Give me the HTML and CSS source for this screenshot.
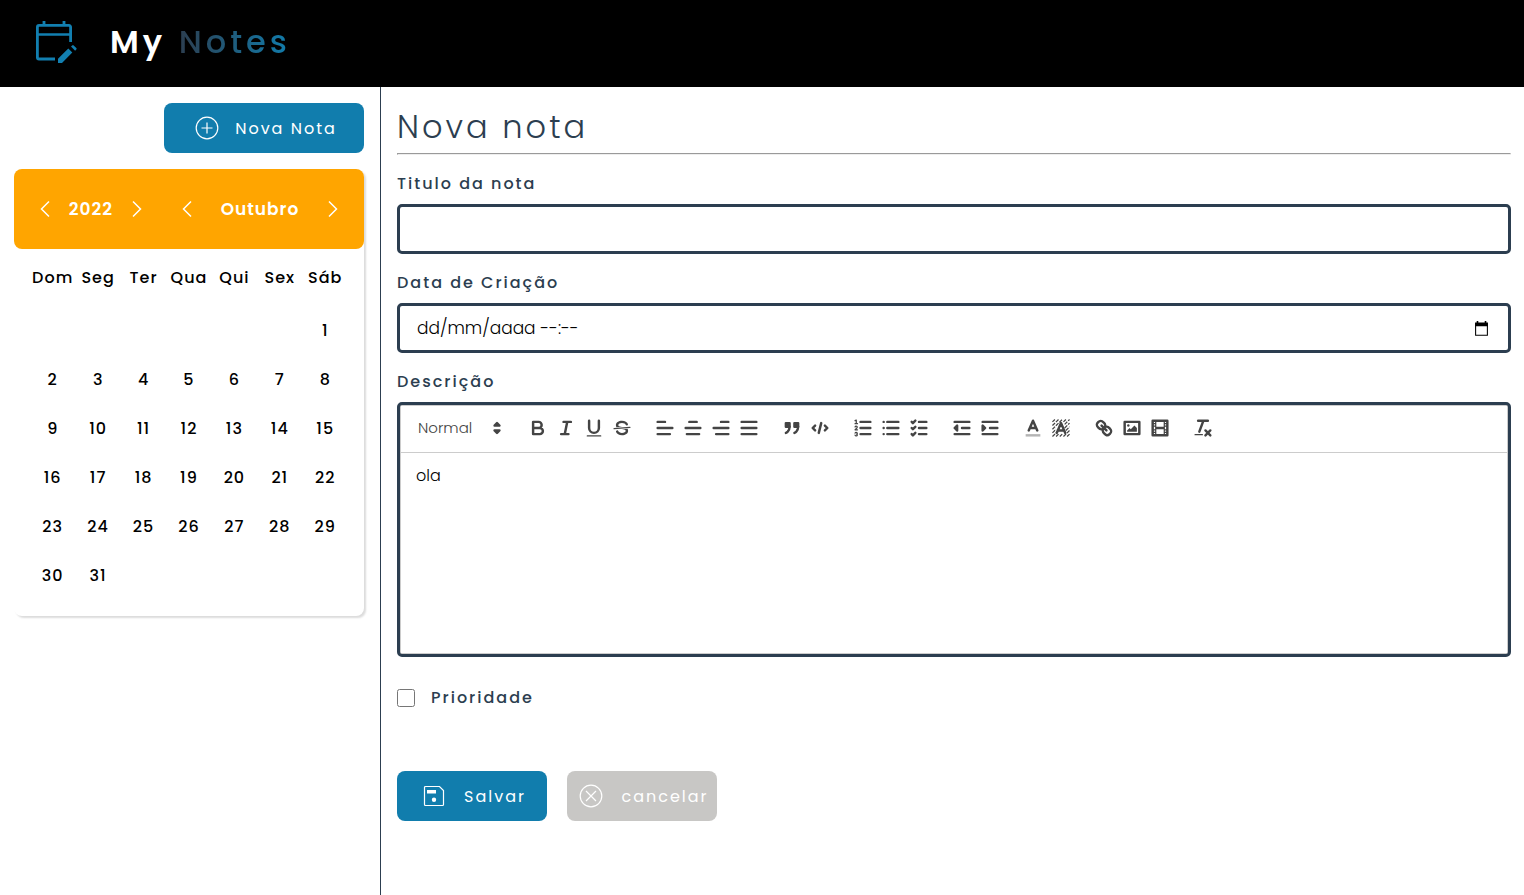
FILE: index.html
```html
<!DOCTYPE html>
<html lang="pt-BR">
<head>
<meta charset="utf-8">
<title>My Notes</title>
<link rel="stylesheet" href="styles.css">
</head>
<body>
<header class="topbar">
  <svg class="logo" viewBox="0 0 42 42" aria-hidden="true">
    <path d="M19 38H3a1.600 1.600 0 0 1-1.600-1.600V6A1.600 1.600 0 0 1 3 4.400h30A1.600 1.600 0 0 1 34.600 6v15M8 0v5M28 0v5" fill="none" stroke="#127fb0" stroke-width="2.800"/>
    <path d="M2 13.500h33" stroke="#127fb0" stroke-width="2.600"/>
    <path d="M22 42v-4.200L32.300 27.600l4 4L26 42zM35 25.600l1.200-1.200a1 1 0 0 1 1.500 0l2.600 2.600a1 1 0 0 1 0 1.500l-1.200 1.200z" fill="#127fb0"/>
  </svg>
  <div class="brand"><strong>My</strong> <span class="brand-accent">Notes</span></div>
</header>
<div class="layout">
  <aside class="sidebar">
    <button class="btn btn-new" type="button">
      <svg viewBox="0 0 24 24" class="btn-icon" aria-hidden="true"><circle cx="12" cy="12" r="10.800"/><path d="M12 6.500v11M6.500 12h11"/></svg>
      Nova Nota
    </button>
    <section class="calendar">
      <div class="calendar-head">
        <div class="stepper year">
          <button type="button" class="arrow" aria-label="Ano anterior"><svg viewBox="0 0 18 18"><path d="M13 1.500 5.500 9l7.500 7.500"/></svg></button>
          <span>2022</span>
          <button type="button" class="arrow" aria-label="Próximo ano"><svg viewBox="0 0 18 18"><path d="M5 1.500 12.500 9 5 16.500"/></svg></button>
        </div>
        <div class="stepper month">
          <button type="button" class="arrow" aria-label="Mês anterior"><svg viewBox="0 0 18 18"><path d="M13 1.500 5.500 9l7.500 7.500"/></svg></button>
          <span>Outubro</span>
          <button type="button" class="arrow" aria-label="Próximo mês"><svg viewBox="0 0 18 18"><path d="M5 1.500 12.500 9 5 16.500"/></svg></button>
        </div>
      </div>
      <div class="calendar-body">
        <table class="days">
          <thead><tr><th>Dom</th><th>Seg</th><th>Ter</th><th>Qua</th><th>Qui</th><th>Sex</th><th>Sáb</th></tr></thead>
          <tbody>
            <tr><td></td><td></td><td></td><td></td><td></td><td></td><td>1</td></tr>
            <tr><td>2</td><td>3</td><td>4</td><td>5</td><td>6</td><td>7</td><td>8</td></tr>
            <tr><td>9</td><td>10</td><td>11</td><td>12</td><td>13</td><td>14</td><td>15</td></tr>
            <tr><td>16</td><td>17</td><td>18</td><td>19</td><td>20</td><td>21</td><td>22</td></tr>
            <tr><td>23</td><td>24</td><td>25</td><td>26</td><td>27</td><td>28</td><td>29</td></tr>
            <tr><td>30</td><td>31</td><td></td><td></td><td></td><td></td><td></td></tr>
          </tbody>
        </table>
      </div>
    </section>
  </aside>
  <main class="content">
    <h1 class="title">Nova nota</h1>
    <hr class="rule">
    <form class="form">
      <div class="field">
        <label for="titulo">Titulo da nota</label>
        <input class="control" id="titulo" type="text">
      </div>
      <div class="field">
        <label for="data">Data de Criação</label>
        <div class="control date">
          <input class="date-input" id="data" type="text" placeholder="dd/mm/aaaa --:--">
          <button class="date-button" type="button" aria-label="Abrir calendário"><svg viewBox="0 0 14 14"><path d="M1.500 2.500h11v10.800h-11z" fill="none" stroke="#000"/><path d="M1 1.500h12V5H1zM2.500 0h1.500v2H2.500zM10 0h1.500v2H10z"/></svg></button>
        </div>
      </div>
      <div class="field">
        <label for="descricao">Descrição</label>
        <div class="editor">
          <div class="toolbar">
            <div class="picker">
              <select class="picker-select" aria-label="Estilo"><option>Normal</option></select>
              <svg class="picker-arrows" viewBox="0 0 18 18" aria-hidden="true"><path class="both" d="M7 11 9 13l2-2zM7 7l2-2 2 2z"/></svg>
            </div>
            <div class="group">
              <button type="button" aria-label="Negrito"><svg viewBox="0 0 18 18"><path d="M5 4H9.500A2.500 2.500 0 0 1 9.500 9H5zM5 9h5.500A2.500 2.500 0 0 1 10.500 14H5z"/></svg></button>
              <button type="button" aria-label="Itálico"><svg viewBox="0 0 18 18"><path d="M7 4h6M5 14h6M8 14 10 4"/></svg></button>
              <button type="button" aria-label="Sublinhado"><svg viewBox="0 0 18 18"><path d="M5 3V9a4 4 0 0 0 8 0V3"/><rect class="fill" x="3" y="15" width="12" height="1" rx=".5"/></svg></button>
              <button type="button" aria-label="Tachado"><svg viewBox="0 0 18 18"><path class="thin" d="M15.500 8.500l-13 1"/><path class="fill" d="M9.007,8C6.542,7.791,6,7.519,6,6.500,6,5.792,7.283,5,9,5c1.571,0,2.765.679,2.969,1.309a1,1,0,0,0,1.900-.617C13.356,4.106,11.354,3,9,3,6.200,3,4,4.538,4,6.500a3.200,3.200,0,0,0,.5,1.843ZM8.984,10C11.457,10.208,12,10.479,12,11.500c0,.708-1.283,1.500-3,1.500-1.571,0-2.765-.679-2.969-1.309a1,1,0,1,0-1.900.617C4.644,13.894,6.646,15,9,15c2.800,0,5-1.538,5-3.500a3.200,3.200,0,0,0-.5-1.843Z"/></svg></button>
            </div>
            <div class="group">
              <button type="button" aria-label="Alinhar à esquerda"><svg viewBox="0 0 18 18"><path d="M3 9h12M3 14h10M3 4h6"/></svg></button>
              <button type="button" aria-label="Centralizar"><svg viewBox="0 0 18 18"><path d="M3 9h12M4 14h10M6 4h6"/></svg></button>
              <button type="button" aria-label="Alinhar à direita"><svg viewBox="0 0 18 18"><path d="M3 9h12M5 14h10M9 4h6"/></svg></button>
              <button type="button" aria-label="Justificar"><svg viewBox="0 0 18 18"><path d="M3 9h12M3 14h12M3 4h12"/></svg></button>
            </div>
            <div class="group">
              <button type="button" aria-label="Citação"><svg viewBox="0 0 18 18"><path class="both" d="M4 5h3v3H4zM11 5h3v3h-3z"/><path class="both" d="M7 8c0 4.031-3 5-3 5M14 8c0 4.031-3 5-3 5"/></svg></button>
              <button type="button" aria-label="Código"><svg viewBox="0 0 18 18"><path d="M5 7 3 9l2 2M13 7l2 2-2 2M10 5 8 13"/></svg></button>
            </div>
            <div class="group">
              <button type="button" aria-label="Lista numerada"><svg viewBox="0 0 18 18"><path d="M7 4h8M7 9h8M7 14h8"/><path class="thin" d="M2.500 5.500h2M2.500 3 3.500 2.500v3M4.500 10.500h-2c0-.234 1.850-1.076 1.850-2.234A.959.959 0 0 0 2.500 8.156M2.500 14.846a.959.959 0 0 0 1.850-.109A.7.7 0 0 0 3.750 14a.688.688 0 0 0 .6-.736.959.959 0 0 0-1.850-.109"/></svg></button>
              <button type="button" aria-label="Lista"><svg viewBox="0 0 18 18"><path d="M6 4h9M6 9h9M6 14h9M3 4h0M3 9h0M3 14h0"/></svg></button>
              <button type="button" aria-label="Lista de tarefas"><svg viewBox="0 0 18 18"><path d="M9 4h6M9 9h6M9 14h6M3 4l1 1 2-2M3 9l1 1 2-2M3 14l1 1 2-2"/></svg></button>
            </div>
            <div class="group">
              <button type="button" aria-label="Diminuir recuo"><svg viewBox="0 0 18 18"><path d="M3 14h12M3 4h12M9 9h6"/><path class="both" d="M5 7v4L3 9z"/></svg></button>
              <button type="button" aria-label="Aumentar recuo"><svg viewBox="0 0 18 18"><path d="M3 14h12M3 4h12M9 9h6"/><path class="both" d="M3 7v4l2-2z"/></svg></button>
            </div>
            <div class="group">
              <button type="button" aria-label="Cor do texto"><svg viewBox="0 0 18 18"><path class="faint" d="M3 15h12"/><path d="M5.500 11 9 3l3.500 8M6.380 9h5.250"/></svg></button>
              <button type="button" aria-label="Cor de fundo"><svg viewBox="0 0 18 18"><path class="hatch" d="M2 4l2-2M2 7l5-5M2 10l8-8M2 13l3-3M2 16l4-4M5 16l2-2M8 16l2-2M11 16l5-5M14 16l2-2M12 9l4-4M13 11l3-3M11 4l2-2M12 6l4-4"/><path d="M5.500 13 9 5l3.500 8M6.380 11h5.250"/></svg></button>
            </div>
            <div class="group">
              <button type="button" aria-label="Link"><svg viewBox="0 0 18 18"><path d="M7 7l4 4M8.900,4.577a3.476,3.476,0,0,1,.36,4.679A3.476,3.476,0,0,1,4.577,8.900C3.185,7.500,2.035,6.400,4.217,4.217S7.500,3.185,8.900,4.577ZM13.423,9.100a3.476,3.476,0,0,0-4.679-.36,3.476,3.476,0,0,0,.36,4.679c1.392,1.392,2.500,2.542,4.679.36S14.815,10.500,13.423,9.100Z"/></svg></button>
              <button type="button" aria-label="Imagem"><svg viewBox="0 0 18 18"><path d="M3 4h12v10H3z"/><circle class="fill" cx="6" cy="7" r="1"/><path class="fill" d="M5 12v-1l2-2 1 1 3-3 2 2v3z"/></svg></button>
              <button type="button" aria-label="Vídeo"><svg viewBox="0 0 18 18"><path d="M3 3h12v12H3z"/><path class="fill" d="M5 3h1v12H5zM12 3h1v12h-1zM5 8h8v2H5zM3 5h3v1H3zM3 7h3v1H3zM3 10h3v1H3zM3 12h3v1H3zM12 5h3v1h-3zM12 7h3v1h-3zM12 10h3v1h-3zM12 12h3v1h-3z"/></svg></button>
            </div>
            <div class="group">
              <button type="button" aria-label="Limpar formatação"><svg viewBox="0 0 18 18"><path d="M5 3h8M6 12 9.350 3M11 11l4 4M15 11l-4 4"/><rect class="fill" x="2" y="14" width="7" height="1" rx=".5"/></svg></button>
            </div>
          </div>
          <textarea class="editor-text" id="descricao">ola</textarea>
        </div>
      </div>
      <label class="priority"><input class="check" type="checkbox"> Prioridade</label>
      <div class="actions">
        <button class="btn" type="button">
          <svg viewBox="0 0 24 24" class="btn-icon" aria-hidden="true"><path d="M2.500 3.500a1 1 0 0 1 1-1h14l4 4v14a1 1 0 0 1-1 1h-17a1 1 0 0 1-1-1z"/><path d="M5 6h9v3.500H5zM12 13.500a2.200 2.200 0 1 1 0 4.400 2.200 2.200 0 0 1 0-4.400z" fill="#fff" stroke="none"/></svg>
          Salvar
        </button>
        <button class="btn btn-muted" type="button">
          <svg viewBox="0 0 24 24" class="btn-icon" aria-hidden="true"><circle cx="12" cy="12" r="10.800"/><path d="M7 7l10 10M17 7 7 17"/></svg>
          cancelar
        </button>
      </div>
    </form>
  </main>
</div>
</body>
</html>
```
FILE: styles.css
```css
* { box-sizing: border-box; }

body {
  margin: 0;
  min-height: 100vh;
  display: flex;
  flex-direction: column;
  font-family: Poppins, Inter, sans-serif;
  font-size: 16px;
  line-height: 24px;
  color: #2c3e50;
  background: #fff;
}

button, input, select, textarea { font: inherit; }
button { padding: 0; border: 0; background: none; cursor: pointer; }
svg { display: block; }

.topbar {
  display: flex;
  align-items: center;
  gap: 32px;
  height: 87px;
  padding: 0 36px 3px;
  background: #000;
}
.logo { width: 42px; height: 42px; }
.brand {
  color: #fff;
  font-size: 32px;
  line-height: 48px;
  letter-spacing: 4px;
}
.brand strong { font-weight: 600; }
.brand-accent {
  font-weight: 500;
  color: transparent;
  background: linear-gradient(90deg, #2c3e50, #117dad);
  -webkit-background-clip: text;
  background-clip: text;
}

.layout { flex: 1; display: flex; }

.sidebar {
  width: 381px;
  flex: none;
  display: flex;
  flex-direction: column;
  gap: 16px;
  padding: 16px 16px 16px 14px;
  border-right: 1px solid #2c3e50;
}

.btn {
  display: flex;
  align-items: center;
  justify-content: center;
  gap: 18px;
  width: 150px;
  height: 50px;
  padding-left: 4px;
  border-radius: 8px;
  background: #117dad;
  color: #fff;
  line-height: 25px;
  letter-spacing: 2px;
}
.btn-new { width: 200px; gap: 16px; align-self: flex-end; }
.btn-muted { background: #c8c7c5; }
.btn-icon {
  flex: none;
  width: 24px;
  height: 24px;
  fill: none;
  stroke: #fff;
  stroke-width: 1.200;
}

.calendar {
  border-radius: 8px;
  box-shadow: 2px 2px 2px #dcdcdc;
}
.calendar-head {
  display: flex;
  justify-content: space-between;
  align-items: center;
  height: 80px;
  padding: 0 22px;
  border-radius: 8px;
  background: #ffa500;
  color: #fff;
  font-size: 17px;
  font-weight: 600;
  line-height: 26px;
  letter-spacing: 1px;
}
.stepper { display: flex; align-items: center; justify-content: space-between; }
.year { width: 110px; }
.month { width: 164px; }
.arrow svg {
  width: 18px;
  height: 18px;
  fill: none;
  stroke: #fff;
  stroke-width: 1.500;
}

.calendar-body { padding: 0 16px 16px; }
.days {
  width: 100%;
  table-layout: fixed;
  border-collapse: collapse;
  color: #000;
  letter-spacing: 1px;
}
.days th, .days td {
  height: 49px;
  padding: 0;
  text-align: center;
  font-weight: 500;
}
.days th { height: 57px; }

.content { flex: 1; min-width: 0; padding: 16px 13px 16px 16px; }
.title {
  margin: 0 0 2px;
  font-size: 32px;
  font-weight: 300;
  line-height: 48px;
  letter-spacing: 3px;
}
.rule { margin: 0 0 16px; }

.form { display: flex; flex-direction: column; gap: 16px; }
.field { display: flex; flex-direction: column; gap: 7px; }
.field label, .priority { font-weight: 500; line-height: 26px; letter-spacing: 2px; }

.control {
  width: 100%;
  height: 50px;
  padding: 0 17px;
  border: 3px solid #2c3e50;
  border-radius: 5px;
  background: #fff;
  color: #000;
}
.date { display: flex; align-items: center; padding-right: 19px; }
.date-input {
  flex: 1;
  min-width: 0;
  padding: 0;
  border: 0;
  outline: 0;
  font-size: 17px;
  font-weight: 300;
  line-height: 26px;
}
.date-input::placeholder { color: #000; }
.date-button svg { width: 15px; height: 15px; }

.editor {
  border: 3px solid #2c3e50;
  border-radius: 5px;
  background: #ccc;
  padding: 1px;
}
.toolbar {
  display: flex;
  flex-wrap: wrap;
  align-items: center;
  gap: 15px;
  min-height: 46px;
  padding: 0 10px 2px;
  background: #fff;
  margin-bottom: 1px;
}
.group { display: flex; }
.group button {
  display: flex;
  align-items: center;
  justify-content: center;
  width: 28px;
  height: 28px;
}
.toolbar svg {
  width: 22px;
  height: 22px;
  fill: none;
  stroke: #444;
  stroke-width: 2;
  stroke-linecap: round;
  stroke-linejoin: round;
}
.toolbar .fill { fill: #444; stroke: none; }
.toolbar .both { fill: #444; }
.toolbar .thin { stroke-width: 1; }
.toolbar .faint { opacity: .4; stroke-linecap: butt; }
.toolbar .hatch { stroke-width: 1; stroke-dasharray: 3 1; stroke-linecap: butt; }

.picker { position: relative; width: 98px; height: 28px; }
.picker-select {
  width: 100%;
  height: 100%;
  padding: 0 7px;
  border: 0;
  appearance: none;
  background: none;
  color: #444;
  font-size: 15px;
  font-weight: 300;
}
.toolbar .picker-arrows {
  position: absolute;
  top: 3px;
  right: 1px;
  stroke-width: 2;
  pointer-events: none;
}
.editor-text {
  display: block;
  width: 100%;
  height: 200px;
  padding: 11px 15px;
  border: 0;
  outline: 0;
  resize: none;
  background: #fff;
  color: #000;
  font-weight: 300;
}

.priority {
  display: flex;
  align-items: center;
  align-self: flex-start;
  gap: 16px;
  margin-top: 12px;
}
.check { width: 18px; height: 18px; margin: 0; }
.actions { display: flex; gap: 20px; margin-top: 44px; }
```
